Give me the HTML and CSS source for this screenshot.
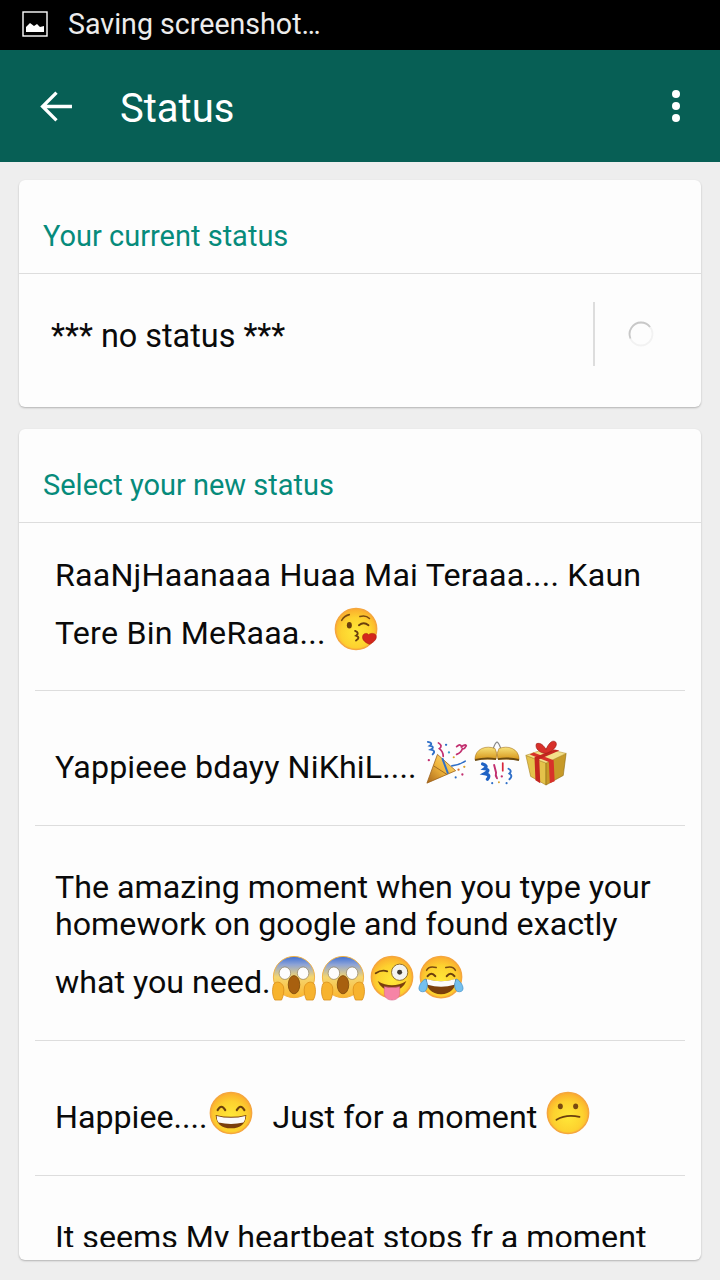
FILE: index.html
```html
<!DOCTYPE html>
<html lang="en">
<head>
  <meta charset="UTF-8" />
  <meta name="viewport" content="width=device-width, initial-scale=1" />
  <title>Status</title>
  <link rel="stylesheet" href="styles.css">
</head>
<body>

  <!-- shared emoji drawings -->
  <svg class="emoji-defs" aria-hidden="true">
    <defs>
      <radialGradient id="faceFill" cx="50%" cy="58%" r="55%">
        <stop offset="0" stop-color="#ffe838" />
        <stop offset="0.65" stop-color="#fdd22f" />
        <stop offset="1" stop-color="#fbb02e" />
      </radialGradient>
      <linearGradient id="screamFill" x1="0" y1="0" x2="0" y2="1">
        <stop offset="0" stop-color="#3d6fd6" />
        <stop offset="0.2" stop-color="#8ea4d6" />
        <stop offset="0.5" stop-color="#f5d670" />
        <stop offset="1" stop-color="#fbb62e" />
      </linearGradient>
      <linearGradient id="goldFill" x1="0" y1="0" x2="0" y2="1">
        <stop offset="0" stop-color="#f7e27a" />
        <stop offset="1" stop-color="#d8981e" />
      </linearGradient>
      <linearGradient id="coneFill" x1="0" y1="1" x2="1" y2="0">
        <stop offset="0" stop-color="#a9661a" />
        <stop offset="0.5" stop-color="#f0b63d" />
        <stop offset="1" stop-color="#fbe08a" />
      </linearGradient>

      <symbol id="kiss" viewBox="0 0 48 48">
        <circle cx="23" cy="24" r="21.5" fill="url(#faceFill)" stroke="#f5a63e" stroke-width="1.6" />
        <path d="M8 15q3-5 8-6" fill="none" stroke="#7a4a10" stroke-width="1.6" stroke-linecap="round" />
        <path d="M27 11q6-2 10 2" fill="none" stroke="#7a4a10" stroke-width="1.6" stroke-linecap="round" />
        <ellipse cx="16" cy="20" rx="2.6" ry="3.4" fill="#6b3f0d" />
        <path d="M26 20q5-4 10 0" fill="none" stroke="#6b3f0d" stroke-width="2" stroke-linecap="round" />
        <path d="M22 26q5 2 1 5q5 2 0 5" fill="none" stroke="#6b3f0d" stroke-width="2" stroke-linecap="round" />
        <path d="M37 40c-5-2-8-5-7-9c1-3 5-3 6-1c2-2 7-2 8 1c1 4-3 7-7 9z" fill="#d3261c" stroke="#a5170f" stroke-width="0.6" />
      </symbol>

      <symbol id="popper" viewBox="0 0 48 48">
        <path d="M2 45L13 15L32 32z" fill="url(#coneFill)" stroke="#9a5f18" stroke-width="0.8" />
        <path d="M9 27L23 36" stroke="#8f5a18" stroke-width="0.8" />
        <path d="M18 19L24 35" stroke="#2f6fc8" stroke-width="2" fill="none" />
        <path d="M28 27q8-1 14-5" stroke="#2f6fc8" stroke-width="1.6" fill="none" stroke-linecap="round" />
        <path d="M3 2q6 1 2 4q6 1 1 4q6 1 2 5" stroke="#2f6fc8" stroke-width="2" fill="none" stroke-linecap="round" />
        <path d="M14 3q5 3 1 6q4 3 4 8" stroke="#c22f6f" stroke-width="1.8" fill="none" stroke-linecap="round" />
        <path d="M33 7q4-4 5 0q4-3 5-1q-2 4-4 3q-1 4-6 6" stroke="#c22f6f" stroke-width="1.8" fill="none" stroke-linecap="round" />
        <circle cx="22" cy="5" r="1.2" fill="#2f6fc8" />
        <circle cx="25" cy="13" r="1.2" fill="#3aa0c8" />
        <circle cx="30" cy="18" r="1.1" fill="#d9a02a" />
        <circle cx="4" cy="21" r="1.2" fill="#c22f6f" />
        <circle cx="35" cy="31" r="1.2" fill="#d9702a" />
        <circle cx="41" cy="28" r="1.2" fill="#d9a02a" />
        <circle cx="39" cy="36" r="1.2" fill="#c22f6f" />
        <circle cx="32" cy="39" r="1.1" fill="#2f6fc8" />
      </symbol>

      <symbol id="confetti" viewBox="0 0 48 48">
        <path d="M20 9q2-6 4-7q2 1 4 7" fill="none" stroke="#888" stroke-width="1.2" />
        <path d="M1 20C1 9 13 5 22 9Q25 14 23 20z" fill="url(#goldFill)" stroke="#a8711a" stroke-width="0.6" />
        <path d="M47 20C47 9 35 5 26 9Q23 14 25 20z" fill="url(#goldFill)" stroke="#a8711a" stroke-width="0.6" />
        <path d="M1 21q11-3 22-1M47 21q-11-3-22-1" fill="none" stroke="#6b4a10" stroke-width="2" />
        <path d="M9 25q6 2 2 5q7 1 0 5q7 1 3 6" fill="none" stroke="#1f62c4" stroke-width="3.4" stroke-linecap="round" />
        <path d="M21 26l2 8q-1 3 1 6" fill="none" stroke="#c22f6f" stroke-width="2" stroke-linecap="round" />
        <path d="M36 30q4 2 1 5q4 2 0 6" fill="none" stroke="#2f6fc8" stroke-width="2" stroke-linecap="round" />
        <path d="M30 24v8" stroke="#d8263c" stroke-width="1.8" stroke-linecap="round" />
        <circle cx="29" cy="38" r="1.2" fill="#c22f6f" />
        <circle cx="19" cy="45" r="1.1" fill="#2f6fc8" />
        <circle cx="34" cy="45" r="1.1" fill="#2f6fc8" />
        <circle cx="26" cy="44" r="1" fill="#d9a02a" />
      </symbol>

      <symbol id="gift" viewBox="0 0 48 48">
        <path d="M3 16L24 24V47L8 38z" fill="#e4c24a" stroke="#a37c1a" stroke-width="0.6" />
        <path d="M45 14L24 24V47L42 37z" fill="#c79a28" stroke="#8a6812" stroke-width="0.6" />
        <path d="M3 16L24 9L45 14L24 24z" fill="#f3e08a" stroke="#b8922a" stroke-width="0.6" />
        <path d="M11 13L32 21L33 43L28 45L27 23L7 15z" fill="#d8322a" />
        <path d="M38 11L17 20L18 45L13 42L12 18L33 10z" fill="#c4261f" />
        <path d="M24 14C18 14 12 9 14 4C18 2 22 6 24 10C26 5 30-1 34 2C37 6 31 12 24 14z" fill="#d8302a" stroke="#a01a14" stroke-width="0.7" />
      </symbol>

      <symbol id="scream" viewBox="0 0 48 48">
        <circle cx="24" cy="23" r="21.5" fill="url(#screamFill)" stroke="#f0b040" stroke-width="1" />
        <ellipse cx="14.5" cy="19" rx="6" ry="6.5" fill="#fdfdfd" stroke="#8a7a58" stroke-width="0.7" />
        <ellipse cx="33.5" cy="19" rx="6" ry="6.5" fill="#fdfdfd" stroke="#8a7a58" stroke-width="0.7" />
        <ellipse cx="24" cy="31" rx="6" ry="9.5" fill="#a8600f" stroke="#7a4508" stroke-width="0.8" />
        <path d="M3 30c3-3 8-2 10 3c1 4 0 10-2 14h-7c-3-5-3-12-1-17z" fill="#f7b32e" stroke="#d98c18" stroke-width="0.8" />
        <path d="M45 30c-3-3-8-2-10 3c-1 4 0 10 2 14h7c3-5 3-12 1-17z" fill="#f7b32e" stroke="#d98c18" stroke-width="0.8" />
      </symbol>

      <symbol id="wink" viewBox="0 0 48 48">
        <circle cx="24" cy="23" r="21.5" fill="url(#faceFill)" stroke="#f5a63e" stroke-width="1.6" />
        <path d="M7 19q6-4 12-2" fill="none" stroke="#6b3f0d" stroke-width="2" stroke-linecap="round" />
        <circle cx="32" cy="18" r="8.5" fill="#f4f4f0" stroke="#8a6a2a" stroke-width="1" />
        <circle cx="32" cy="18" r="2.6" fill="#3f3a30" />
        <path d="M9 27q15 9 30 0q-4 10-15 10t-15-10z" fill="#7a3f0c" />
        <path d="M16 33q8 2 16 0v7c0 4-3 7-8 7s-8-3-8-7z" fill="#f684a6" stroke="#d9638a" stroke-width="0.6" />
      </symbol>

      <symbol id="joy" viewBox="0 0 48 48">
        <circle cx="24" cy="23" r="21.5" fill="url(#faceFill)" stroke="#f5a63e" stroke-width="1.6" />
        <path d="M9 16q2-5 10-3M39 16q-2-5-10-3" fill="none" stroke="#7a4a10" stroke-width="1.6" stroke-linecap="round" />
        <path d="M10 22q4-5 8 0M30 22q4-5 8 0" fill="none" stroke="#6b3f0d" stroke-width="2.2" stroke-linecap="round" />
        <path d="M8 25q16 5 32 0q-1 15-16 16q-15-1-16-16z" fill="#7a3f0c" />
        <path d="M9 25q15 5 30 0q0 4-1 6q-14 4-28 0q-1-2-1-6z" fill="#fbfbfb" />
        <path d="M8 25c-3 1-7 6-7 10c0 3 3 4 6 3c3-2 4-8 1-13z" fill="#74c0ee" stroke="#3f8fc8" stroke-width="0.7" />
        <path d="M40 25c3 1 7 6 7 10c0 3-3 4-6 3c-3-2-4-8-1-13z" fill="#74c0ee" stroke="#3f8fc8" stroke-width="0.7" />
      </symbol>

      <symbol id="smile" viewBox="0 0 48 48">
        <circle cx="24" cy="24" r="21.5" fill="url(#faceFill)" stroke="#f5a63e" stroke-width="1.6" />
        <path d="M10 21q4-7 8 0M30 21q4-7 8 0" fill="none" stroke="#6b3f0d" stroke-width="2.2" stroke-linecap="round" />
        <path d="M8 26q16 4 32 0q-1 14-16 14q-15 0-16-14z" fill="#7a3f0c" />
        <path d="M9 27q15 4 30 0q0 4-2 7q-13 3-26 0q-2-3-2-7z" fill="#fbfbfb" />
      </symbol>

      <symbol id="confused" viewBox="0 0 48 48">
        <circle cx="24" cy="24" r="21.5" fill="url(#faceFill)" stroke="#f5a63e" stroke-width="1.6" />
        <ellipse cx="16" cy="17" rx="2.6" ry="3" fill="#7a4a10" />
        <ellipse cx="32" cy="17" rx="2.6" ry="3" fill="#7a4a10" />
        <path d="M12 31q10-6 24-3" fill="none" stroke="#6b3f0d" stroke-width="2" stroke-linecap="round" />
      </symbol>
    </defs>
  </svg>

  <div class="status-bar">
    <svg class="status-bar-icon" viewBox="0 0 26 26" aria-hidden="true">
      <rect x="1" y="1" width="24" height="24" fill="none" stroke="#fff" stroke-width="1.4" />
      <path d="M4 21v-5l4-4 4 3 3-2 3 3 4-1v6z" fill="#fff" />
    </svg>
    <span>Saving screenshot…</span>
  </div>

  <header class="app-bar">
    <svg class="back-icon" viewBox="0 0 32 30" aria-hidden="true">
      <path d="M31 15H3M16 1.500L2.500 15 16 28.500" fill="none" stroke="#fff" stroke-width="3.200" />
    </svg>
    <h1>Status</h1>
    <div class="overflow-menu" aria-hidden="true">
      <span></span><span></span><span></span>
    </div>
  </header>

  <main>
    <section class="card">
      <h2>Your current status</h2>
      <div class="current-row">
        <p>*** no status ***</p>
        <div class="spinner-box">
          <svg class="spinner" viewBox="0 0 26 26" aria-hidden="true">
            <circle cx="13" cy="13" r="11.500" fill="none" stroke="#f2f2f2" stroke-width="1.800" />
            <path d="M2.500 17.500A11.500 11.500 0 0 1 13 1.500A11.500 11.500 0 0 1 22 6" fill="none" stroke="#c8c8c8" stroke-width="1.800" />
          </svg>
        </div>
      </div>
    </section>

    <section class="card card-list">
      <h2>Select your new status</h2>
      <div class="status-list">
        <div class="status-item status-item-first">RaaNjHaanaaa Huaa Mai Teraaa.... Kaun Tere Bin MeRaaa... <svg class="emoji"><use href="#kiss" /></svg></div>
        <div class="status-item status-item-party">Yappieee bdayy NiKhiL.... <svg class="emoji"><use href="#popper" /></svg><svg class="emoji"><use href="#confetti" /></svg><svg class="emoji"><use href="#gift" /></svg></div>
        <div class="status-item status-item-long">The amazing moment when you type your homework on google and found exactly what you need.<svg class="emoji"><use href="#scream" /></svg><svg class="emoji"><use href="#scream" /></svg><svg class="emoji"><use href="#wink" /></svg><svg class="emoji"><use href="#joy" /></svg></div>
        <div class="status-item">Happiee....<svg class="emoji"><use href="#smile" /></svg>&nbsp; Just for a moment <svg class="emoji"><use href="#confused" /></svg></div>
        <div class="status-item status-item-long">It seems My heartbeat stops fr a moment</div>
      </div>
    </section>
  </main>

</body>
</html>
```

FILE: styles.css
```css
* {
  box-sizing: border-box;
}

html, body {
  height: 100%;
}

body {
  margin: 0;
  font-family: Roboto, "Noto Sans", sans-serif;
  background: #eeeeee;
  color: #0a0a0a;
  display: flex;
  flex-direction: column;
  overflow: hidden;
}

.emoji-defs {
  display: block;
  width: 0;
  height: 0;
}

.status-bar {
  height: 50px;
  flex: none;
  background: #000;
  color: #ececec;
  display: flex;
  align-items: center;
  padding: 0 0 2px 22px;
  font-size: 28.6px;
}

.status-bar-icon {
  width: 26px;
  height: 26px;
  margin-right: 20px;
}

.app-bar {
  height: 112px;
  flex: none;
  background: #075f55;
  color: #fff;
  display: flex;
  align-items: center;
  padding: 0 40px;
}

.back-icon {
  width: 33px;
  height: 31px;
  margin-right: 47px;
}

.app-bar h1 {
  flex: 1;
  margin: 0;
  padding-top: 5px;
  font-size: 40px;
  font-weight: 400;
}

.overflow-menu {
  display: flex;
  flex-direction: column;
  gap: 4px;
}

.overflow-menu span {
  display: block;
  width: 8px;
  height: 8px;
  border-radius: 50%;
  background: #fff;
}

main {
  flex: 1;
  min-height: 0;
  display: flex;
  flex-direction: column;
  gap: 22px;
  padding: 18px 19px 20px;
}

.card {
  background: #fdfdfd;
  border-radius: 6px;
  box-shadow: 0 1px 2px rgba(0, 0, 0, 0.25);
}

.card h2 {
  height: 94px;
  margin: 0;
  padding: 40px 24px 0;
  font-size: 29px;
  line-height: 32px;
  font-weight: 400;
  color: #068b7b;
  border-bottom: 1px solid #dddddd;
}

.current-row {
  height: 133px;
  display: flex;
  align-items: center;
  padding-left: 32px;
}

.current-row p {
  flex: 1;
  margin: 0 0 10px;
  font-size: 32.4px;
}

.spinner-box {
  width: 108px;
  height: 64px;
  margin-bottom: 14px;
  border-left: 2px solid #dddddd;
  display: flex;
  align-items: center;
  justify-content: center;
}

.spinner {
  width: 26px;
  height: 26px;
  margin-right: 14px;
}

.card-list {
  flex: 1;
  min-height: 0;
  display: flex;
  flex-direction: column;
  padding-bottom: 13px;
}

.status-list {
  flex: 1;
  min-height: 0;
  overflow: hidden;
  padding: 0 16px;
}

.status-item {
  padding: 37px 20px 39px;
  border-bottom: 1px solid #dddddd;
  font-size: 32.2px;
  line-height: 37px;
}

.status-item:last-child {
  border-bottom: none;
}

.status-item-first {
  padding-top: 34px;
  padding-bottom: 38px;
  letter-spacing: 0.2px;
}

.status-item-party {
  letter-spacing: 0.12px;
}

.status-item-long {
  padding-top: 43px;
}

.emoji {
  width: 46px;
  height: 46px;
  margin: 12px 3px 0 0;
  vertical-align: -8px;
}
```
